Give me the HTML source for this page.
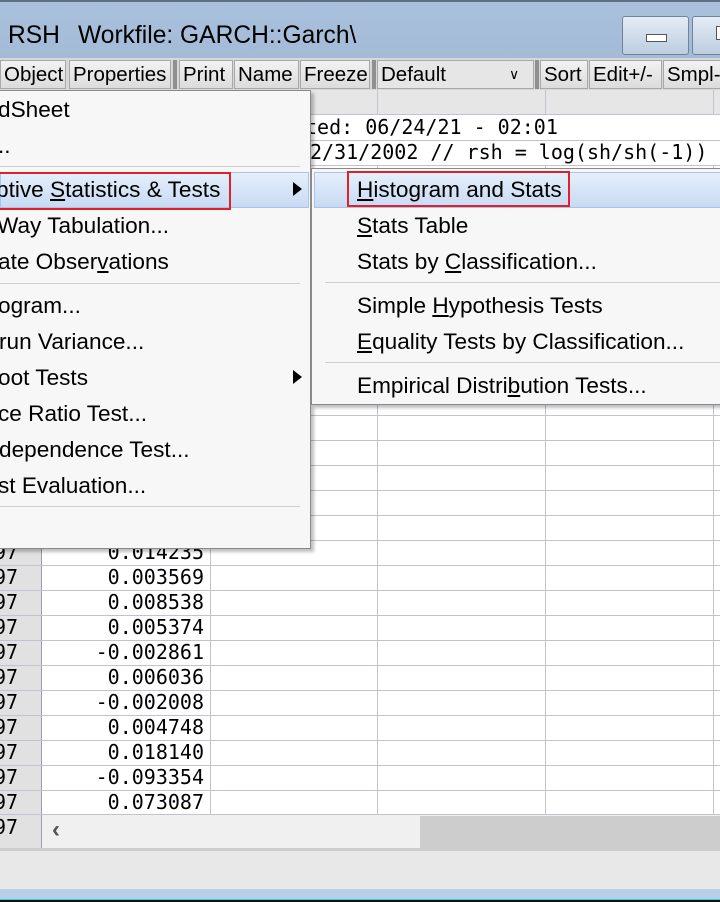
<!DOCTYPE html>
<html><head><meta charset="utf-8"><style>
*{margin:0;padding:0;box-sizing:border-box}
body{width:720px;height:902px;overflow:hidden;position:relative;background:#fff;font-family:"Liberation Sans",sans-serif;color:#000}
.a{position:absolute}
.t{position:absolute;white-space:nowrap;font-size:22.6px;line-height:26px}
.m{font-family:"DejaVu Sans Mono","Liberation Mono",monospace;font-size:20px;line-height:23px;position:absolute;white-space:nowrap}
.btn{position:absolute;top:60px;height:29px;background:linear-gradient(#f2f2f2,#dcdcdc);border:1px solid #a8a8a8;font-size:20.5px;line-height:27px;padding-left:3px;white-space:nowrap;overflow:hidden}
.hl{position:absolute;top:172px;height:36px;background:linear-gradient(#e6effb,#c8daf3);border:1px solid #a9c4ea}
.red{position:absolute;border:2px solid #e0202a}
.sep{position:absolute;height:1px;background:#cfcfcf}
.hline{position:absolute;left:0;width:720px;height:1px;background:#c4c2d0}
.vline{position:absolute;width:1px;background:#c4c2d0}
</style></head><body>
<div class="a" style="left:0;top:0;width:720px;height:58px;background:linear-gradient(#a9c1dc,#a3bbd6)"></div>
<div class="a" style="left:0;top:0;width:720px;height:2px;background:#5d6f84"></div>
<div class="t" style="left:8px;top:21px;font-size:24.6px;line-height:29px">RSH</div>
<div class="t" style="left:78px;top:21px;font-size:24.6px;line-height:29px">Workfile: GARCH::Garch\</div>
<div class="a" style="left:622px;top:16px;width:67px;height:39px;border:1px solid #6f849c;border-radius:3px;background:linear-gradient(#e4ecf5,#bccde0)"></div>
<div class="a" style="left:646px;top:34px;width:21px;height:8px;border:1px solid #555;background:#fff"></div>
<div class="a" style="left:692px;top:16px;width:40px;height:39px;border:1px solid #6f849c;border-radius:3px;background:linear-gradient(#e4ecf5,#bccde0)"></div>
<div class="a" style="left:716px;top:26px;width:6px;height:14px;border:1px solid #555;background:#fff"></div>
<div class="a" style="left:0;top:58px;width:720px;height:32px;background:#d8d8d8"></div>
<div class="btn" style="left:0;width:66px">Object</div>
<div class="btn" style="left:69px;width:102px">Properties</div>
<div class="a" style="left:173px;top:60px;width:4px;height:29px;background:#909090"></div>
<div class="btn" style="left:179px;width:54px">Print</div>
<div class="btn" style="left:234px;width:65px">Name</div>
<div class="btn" style="left:300px;width:70px">Freeze</div>
<div class="a" style="left:372px;top:60px;width:4px;height:29px;background:#909090"></div>
<div class="btn" style="left:377px;width:157px;background:#e6e6e6">Default<span style="position:absolute;left:131px;top:0;font-size:14px">&#8744;</span></div>
<div class="a" style="left:535px;top:60px;width:4px;height:29px;background:#909090"></div>
<div class="btn" style="left:540px;width:48px">Sort</div>
<div class="btn" style="left:589px;width:73px">Edit+/-</div>
<div class="btn" style="left:663px;width:70px">Smpl-</div>
<div class="a" style="left:0;top:90px;width:720px;height:25px;background:#e6e6e6;border-bottom:1px solid #c4c2d0"></div>
<div class="vline" style="left:377px;top:90px;height:25px"></div>
<div class="vline" style="left:545px;top:90px;height:25px"></div>
<div class="vline" style="left:713px;top:90px;height:25px"></div>
<div class="m" style="left:305px;top:116px">ted: 06/24/21 - 02:01</div>
<div class="m" style="left:310px;top:141px">2/31/2002 // rsh = log(sh/sh(-1))</div>
<div class="hline" style="top:140px"></div>
<div class="hline" style="top:165px"></div>
<div class="a" style="left:0;top:165px;width:42px;height:685px;background:#e1e1e1;border-right:1px solid #9e9eb0"></div>
<div class="vline" style="left:210px;top:165px;height:650px"></div>
<div class="vline" style="left:377px;top:165px;height:650px"></div>
<div class="vline" style="left:545px;top:165px;height:650px"></div>
<div class="vline" style="left:713px;top:165px;height:650px"></div>
<div class="hline" style="top:415px"></div><div class="hline" style="top:440px"></div><div class="hline" style="top:465px"></div><div class="hline" style="top:490px"></div><div class="hline" style="top:515px"></div><div class="hline" style="top:540px"></div><div class="hline" style="top:565px"></div><div class="hline" style="top:590px"></div><div class="hline" style="top:615px"></div><div class="hline" style="top:640px"></div><div class="hline" style="top:665px"></div><div class="hline" style="top:690px"></div><div class="hline" style="top:715px"></div><div class="hline" style="top:740px"></div><div class="hline" style="top:765px"></div><div class="hline" style="top:790px"></div><div class="hline" style="top:814px"></div>
<div class="m" style="left:-6px;top:541px">97</div><div class="m" style="left:-6px;top:566px">97</div><div class="m" style="left:-6px;top:591px">97</div><div class="m" style="left:-6px;top:616px">97</div><div class="m" style="left:-6px;top:641px">97</div><div class="m" style="left:-6px;top:666px">97</div><div class="m" style="left:-6px;top:691px">97</div><div class="m" style="left:-6px;top:716px">97</div><div class="m" style="left:-6px;top:741px">97</div><div class="m" style="left:-6px;top:766px">97</div><div class="m" style="left:-6px;top:791px">97</div><div class="m" style="left:-6px;top:816px">97</div>
<div class="m" style="left:0;top:541px;width:204px;text-align:right">0.014235</div>
<div class="m" style="left:0;top:566px;width:204px;text-align:right">0.003569</div>
<div class="m" style="left:0;top:591px;width:204px;text-align:right">0.008538</div>
<div class="m" style="left:0;top:616px;width:204px;text-align:right">0.005374</div>
<div class="m" style="left:0;top:641px;width:204px;text-align:right">-0.002861</div>
<div class="m" style="left:0;top:666px;width:204px;text-align:right">0.006036</div>
<div class="m" style="left:0;top:691px;width:204px;text-align:right">-0.002008</div>
<div class="m" style="left:0;top:716px;width:204px;text-align:right">0.004748</div>
<div class="m" style="left:0;top:741px;width:204px;text-align:right">0.018140</div>
<div class="m" style="left:0;top:766px;width:204px;text-align:right">-0.093354</div>
<div class="m" style="left:0;top:791px;width:204px;text-align:right">0.073087</div>
<div class="a" style="left:42px;top:815px;width:678px;height:35px;background:#f0f0f0"></div>
<div class="a" style="left:420px;top:816px;width:300px;height:32px;background:#cdcdcd"></div>
<div class="t" style="left:52px;top:817px;font-size:24px;color:#555;font-weight:bold">&#8249;</div>
<div class="a" style="left:0;top:848px;width:720px;height:3px;background:#ccc"></div>
<div class="a" style="left:0;top:851px;width:720px;height:38px;background:#e8e8e8"></div>
<div class="a" style="left:0;top:889px;width:720px;height:11px;background:#b8cfe8"></div>
<div class="a" style="left:0;top:899px;width:720px;height:1px;background:#3cc8e8"></div>
<div class="a" style="left:0;top:900px;width:720px;height:2px;background:#111"></div>
<div class="a" style="left:0;top:90px;width:311px;height:459px;background:#f7f7f7;border:1px solid #8a8a8a;border-left:none;box-shadow:3px 3px 3px rgba(0,0,0,.25)"></div>
<div class="t" style="left:-2px;top:97px">dSheet</div>
<div class="t" style="left:-2px;top:133px">..</div>
<div class="sep" style="left:0;top:166px;width:300px"></div>
<div class="hl" style="left:0;width:309px"></div>
<div class="red" style="left:-2px;top:172px;width:233px;height:38px"></div>
<div class="t" style="left:-4px;top:177px">ptive <u>S</u>tatistics &amp; Tests</div>
<div class="a" style="left:293px;top:182px;width:0;height:0;border-left:9px solid #000;border-top:7px solid transparent;border-bottom:7px solid transparent"></div>
<div class="t" style="left:-3px;top:213px">Way Tabulation...</div>
<div class="t" style="left:-2px;top:249px">ate Obser<u>v</u>ations</div>
<div class="sep" style="left:0;top:283px;width:300px"></div>
<div class="t" style="left:-2px;top:293px">ogram...</div>
<div class="t" style="left:-1px;top:329px">run Variance...</div>
<div class="t" style="left:-2px;top:365px">oot Tests</div>
<div class="a" style="left:293px;top:370px;width:0;height:0;border-left:9px solid #000;border-top:7px solid transparent;border-bottom:7px solid transparent"></div>
<div class="t" style="left:-2px;top:401px">ce Ratio Test...</div>
<div class="t" style="left:-1px;top:437px">dependence Test...</div>
<div class="t" style="left:-2px;top:473px">st Evaluation...</div>
<div class="sep" style="left:0;top:506px;width:300px"></div>
<div class="a" style="left:311px;top:168px;width:420px;height:237px;background:#f7f7f7;border:1px solid #8a8a8a;box-shadow:3px 3px 3px rgba(0,0,0,.25)"></div>
<div class="hl" style="left:314px;width:410px"></div>
<div class="red" style="left:347px;top:171px;width:223px;height:36px"></div>
<div class="t" style="left:357px;top:177px"><u>H</u>istogram and Stats</div>
<div class="t" style="left:357px;top:213px"><u>S</u>tats Table</div>
<div class="t" style="left:357px;top:249px">Stats by <u>C</u>lassification...</div>
<div class="sep" style="left:325px;top:282px;width:400px"></div>
<div class="t" style="left:357px;top:293px">Simple <u>H</u>ypothesis Tests</div>
<div class="t" style="left:357px;top:329px"><u>E</u>quality Tests by Classification...</div>
<div class="sep" style="left:325px;top:362px;width:400px"></div>
<div class="t" style="left:357px;top:373px">Empirical Distri<u>b</u>ution Tests...</div>
</body></html>
